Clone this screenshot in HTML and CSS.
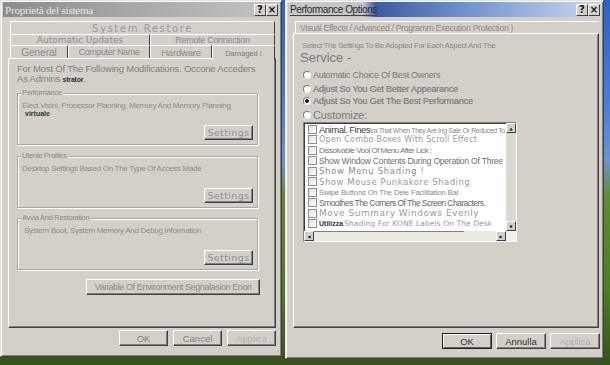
FILE: index.html
```html
<!DOCTYPE html>
<html lang="it">
<head>
    <meta charset="UTF-8">
    <title>Proprietà del sistema</title>
    <link rel="stylesheet" href="styles.css">
</head>
<body>
<div class="desktop">
    <section class="dialog sys">
        <header class="titlebar inactive">
            <span class="title">Proprietà del sistema</span>
            <span class="caption"><span class="cbtn">?</span><span class="cbtn">&#215;</span></span>
        </header>
        <div class="sheet">
            <div class="tabrow r1"><span class="tab t-sr">System Restore</span></div>
            <div class="tabrow r2">
                <span class="tab t-upd">Automatic Updates</span>
                <span class="tab t-rem">Remote Connection</span>
            </div>
            <div class="tabrow r3">
                <span class="tab t-gen">General</span>
                <span class="tab t-comp">Computer Name</span>
                <span class="tab t-hw">Hardware</span>
                <span class="tab t-adv active">Damaged !</span>
            </div>
            <div class="panel">
                <p class="intro">For Most Of The Following Modifications. Occone Acceders<br>As Admins <b>strator</b>.</p>

                <div class="group g1">
                    <span class="legend">Performance</span>
                    <p class="gtext">Elect Visini, Processor Planning, Memory And Memory Planning</p>
                    <p class="gnote">virtuale</p>
                    <div class="gfoot"><button class="btn set">Settings</button></div>
                </div>

                <div class="group g2">
                    <span class="legend">Utente Profiles</span>
                    <p class="gtext">Desktop Settings Based On The Type Of Access Made</p>
                    <div class="gfoot"><button class="btn set">Settings</button></div>
                </div>

                <div class="group g3">
                    <span class="legend">Avvia And Restoration</span>
                    <p class="gtext">System Boot, System Memory And Debug Information</p>
                    <div class="gfoot"><button class="btn set">Settings</button></div>
                </div>

                <div class="envrow">
                    <button class="btn env">Variable Of Environment Segnalasion Enori</button>
                </div>
            </div>
        </div>
        <footer class="dlgbtns">
            <button class="btn">OK</button>
            <button class="btn">Cancel</button>
            <button class="btn off">Applica</button>
        </footer>
    </section>

    <section class="dialog perf">
        <header class="titlebar active-bar">
            <span class="title">Performance Options</span>
            <span class="caption"><span class="cbtn">?</span><span class="cbtn">&#215;</span></span>
        </header>
        <div class="sheet">
            <div class="tabrow r-vis"><span class="tab t-vis">Visual Effects / Advanced / Programm Execution Protection )</span></div>
            <div class="panel ppanel">
                <p class="select">Select The Settings To Be Adopted For Each Aspect And The</p>
                <p class="service">Service -</p>

                <div class="radio r-auto"><span class="dot"></span><span>Automatic Choice Of Best Owners</span></div>
                <div class="radio r-look"><span class="dot"></span><span>Adjust So You Get Better Appearance</span></div>
                <div class="radio r-best checked"><span class="dot"></span><span>Adjust So You Get The Best Performance</span></div>
                <div class="radio r-cust"><span class="dot"></span><span>Customize:</span></div>

                <div class="listbox">
                    <ul class="items">
                        <li class="i1"><span class="box"></span><span><b>Animal. Fines</b>tra That When They Are Ing Sale Or Reduced To</span></li>
                        <li class="i2"><span class="box"></span><span>Open Combo Boxes With Scroll Effect</span></li>
                        <li class="i3"><span class="box"></span><span>Dissolvable Vool Of Menu After Lick :</span></li>
                        <li class="i4"><span class="box"></span><span>Show Window Contents During Operation Of Three</span></li>
                        <li class="i5"><span class="box"></span><span>Show Menu Shading !</span></li>
                        <li class="i6"><span class="box"></span><span>Show Mouse Punkakore Shading</span></li>
                        <li class="i7"><span class="box"></span><span>Swipe Buttons On The Dele Facilitation Bar</span></li>
                        <li class="i8"><span class="box"></span><span>Smoothes The Corners Of The Screen Characters.</span></li>
                        <li class="i9"><span class="box"></span><span>Move Summary Windows Evenly</span></li>
                        <li class="i10"><span class="box"></span><span><b>Utilizza</b>Shading For KONE Labels On The Desk</span></li>
                    </ul>
                    <div class="vbar">
                        <span class="arrow">&#9650;</span>
                        <span class="track"></span>
                        <span class="arrow">&#9660;</span>
                    </div>
                    <div class="hbar">
                        <span class="arrow">&#9664;</span>
                        <span class="thumb"></span>
                        <span class="arrow">&#9654;</span>
                    </div>
                    <div class="corner"></div>
                </div>
            </div>
        </div>
        <footer class="dlgbtns">
            <button class="btn default">OK</button>
            <button class="btn dark">Annulla</button>
            <button class="btn off">Applica</button>
        </footer>
    </section>
</div>
</body>
</html>
```

FILE: styles.css
```css
body {
    margin: 0;
    width: 610px;
    height: 365px;
    overflow: hidden;
    font-family: "Liberation Sans", Arial, sans-serif;
    font-size: 10px;
    color: #7a7a7a;
    background: linear-gradient(180deg, #2f60c4 0%, #4f7fd6 30%, #6f93cc 44%, #5f8c34 54%, #4c7c26 80%, #34521c 100%);
}
p {
    margin: 0;
}
.desktop {
    display: flex;
    gap: 3px;
    align-items: flex-start;
}

/* dialog frame */
.dialog {
    box-sizing: border-box;
    display: flex;
    flex-direction: column;
    background: #d4d0c8;
    border: 1px solid;
    border-color: #e4e2dc #404040 #404040 #e4e2dc;
    box-shadow: inset 1px 1px 0 #fff, inset -1px -1px 0 #808080;
    padding: 1px 2px 2px 2px;
}
.sys {
    width: 282px;
    height: 357px;
}
.perf {
    width: 319px;
    height: 359px;
}
.titlebar {
    height: 15px;
    display: flex;
    align-items: center;
    justify-content: space-between;
    padding: 0 1px 0 2px;
}
.inactive {
    background: linear-gradient(90deg, #8c8c8c, #a4a4a4 40%, #c4c4c4);
}
.inactive .title {
    font-family: "Liberation Serif", serif;
    font-size: 11px;
    letter-spacing: -0.2px;
    color: #e6e6e6;
}
.active-bar {
    background: linear-gradient(90deg, #c8c8c8 0%, #c4c4c6 24%, #3b5aa0 28%, #6d8fcc 55%, #b6c8e8 90%, #c8d6ee 100%);
}
.active-bar .title {
    color: #2a2a2a;
    font-size: 10px;
    letter-spacing: -0.4px;
    border-bottom: 1px solid #404040;
    line-height: 11px;
}
.caption {
    display: flex;
}
.cbtn {
    box-sizing: border-box;
    width: 12px;
    height: 12px;
    display: flex;
    align-items: center;
    justify-content: center;
    background: #d4d0c8;
    border: 1px solid;
    border-color: #fff #404040 #404040 #fff;
    font: bold 10px "DejaVu Sans", sans-serif;
    color: #111;
}

/* tabs */
.sheet {
    display: flex;
    flex-direction: column;
    margin: 4px 0 0 5px;
}
.sys .sheet {
    width: 268px;
}
.perf .sheet {
    width: 306px;
}
.tabrow {
    display: flex;
    padding: 0 1px 0 2px;
}
.tab {
    box-sizing: border-box;
    display: flex;
    align-items: center;
    justify-content: center;
    border-top: 1px solid #fff;
    border-left: 1px solid #fff;
    border-right: 1px solid #404040;
    white-space: nowrap;
    color: #8a8a8a;
}
.r1 .tab { height: 13px; }
.r2 .tab { height: 11px; }
.r3 .tab { height: 13px; }
.t-sr {
    flex: 1;
    font: 10px "DejaVu Sans", sans-serif;
    letter-spacing: 1.6px;
    color: #9a9a9a;
}
.t-upd {
    width: 140px;
    font: 9px "DejaVu Sans", sans-serif;
    letter-spacing: 0;
}
.t-rem {
    flex: 1;
    font-size: 9px;
    letter-spacing: -0.3px;
}
.t-gen { width: 58px; font-size: 10px; }
.t-comp { width: 82px; font-size: 9px; letter-spacing: -0.4px; }
.t-hw { width: 62px; font-size: 9.5px; letter-spacing: -0.2px; }
.t-adv {
    flex: 1;
    font-size: 7.5px;
    height: 15px !important;
    margin-bottom: -2px;
    background: #d4d0c8;
    position: relative;
    z-index: 1;
    color: #777;
}

/* tab page */
.panel {
    box-sizing: border-box;
    height: 270px;
    border: 1px solid;
    border-color: #fff #404040 #404040 #fff;
    box-shadow: inset -1px -1px 0 #808080;
    padding: 5px 0 0 8px;
}
.intro {
    font-size: 9.5px;
    line-height: 10px;
    letter-spacing: -0.2px;
    color: #808080;
}
.intro b {
    font-size: 7px;
    color: #333;
}
.group {
    box-sizing: border-box;
    width: 241px;
    height: 52px;
    display: flex;
    flex-direction: column;
    border: 1px solid #a8a6a0;
    box-shadow: 1px 1px 0 #fff, inset 1px 1px 0 #fff;
}
.g1 { margin-top: 8px; }
.g2 { margin-top: 11px; }
.g3 { margin-top: 10px; }
.legend {
    align-self: flex-start;
    margin: -5px 0 0 3px;
    padding: 0 1px;
    background: #d4d0c8;
    font-size: 7.5px;
    line-height: 8px;
    letter-spacing: -0.3px;
    color: #8a8a8a;
}
.gtext {
    margin: 5px 0 0 4px;
    font-size: 8px;
    line-height: 8px;
    letter-spacing: -0.3px;
    color: #8c8c8c;
    white-space: nowrap;
}
.g3 .gtext { margin-left: 6px; }
.gnote {
    margin: 0 0 0 7px;
    font-size: 7px;
    line-height: 7px;
    font-weight: bold;
    color: #333;
}
.gfoot {
    margin-top: auto;
    display: flex;
    justify-content: flex-end;
    padding: 0 4px 4px 0;
}

/* buttons */
.btn {
    box-sizing: border-box;
    height: 16px;
    padding: 0;
    background: #d4d0c8;
    border: 1px solid;
    border-color: #fff #404040 #404040 #fff;
    box-shadow: inset -1px -1px 0 #808080;
    font-family: "Liberation Sans", Arial, sans-serif;
    font-size: 9.5px;
    color: #808080;
    white-space: nowrap;
}
.set {
    width: 49px;
    height: 15px;
    font: 9.5px "DejaVu Sans", sans-serif;
    letter-spacing: 0.4px;
    color: #909090;
}
.envrow {
    display: flex;
    margin: 9px 0 0 69px;
}
.env {
    width: 174px;
    font-size: 9px;
    letter-spacing: -0.4px;
    color: #8a8a8a;
    overflow: hidden;
}
.dlgbtns {
    display: flex;
    justify-content: flex-end;
    gap: 5px;
    padding-right: 3px;
    margin-top: 2px;
}
.dlgbtns .btn {
    width: 49px;
}
.off {
    color: #b0b0b0;
}
.perf .dlgbtns {
    gap: 4px;
    padding-right: 1px;
    margin-top: 5px;
}
.perf .dlgbtns .btn {
    width: 50px;
    height: 16px;
}
.default {
    border: 1px solid #202020;
    box-shadow: inset 1px 1px 0 #fff, inset -1px -1px 0 #606060;
    color: #333;
}
.dark {
    color: #333;
}

/* performance options page */
.t-vis {
    flex: 1;
    height: 12px;
    justify-content: flex-start;
    padding-left: 4px;
    border-right: none;
    font-size: 8.5px;
    letter-spacing: -0.25px;
    color: #8a8a8a;
}
.ppanel {
    height: 295px;
    padding: 7px 0 0 8px;
}
.select {
    font-size: 8px;
    line-height: 9px;
    letter-spacing: -0.4px;
    color: #8a8a8a;
}
.service {
    margin: 2px 0 0 -2px;
    font-size: 13px;
    line-height: 12px;
    color: #7a7a7a;
}
.radio {
    display: flex;
    align-items: center;
    gap: 2px;
    height: 12px;
    white-space: nowrap;
    color: #7a7a7a;
}
.dot {
    box-sizing: border-box;
    width: 8px;
    height: 8px;
    margin-left: 1px;
    border-radius: 50%;
    border: 1px solid;
    border-color: #7a7a7a #eee #eee #7a7a7a;
    background: #fff;
}
.checked .dot {
    background: radial-gradient(circle, #222 0 1.6px, #fff 2px);
}
.r-auto { margin-top: 5px; font-size: 9px; letter-spacing: -0.3px; }
.r-look, .r-best {
    font-size: 9px;
    letter-spacing: -0.15px;
    color: #808080;
    text-shadow: 0.4px 0 0 #9a9a9a;
}
.r-look { margin-top: 2px; }
.r-best { margin-top: 0; }
.r-cust { margin-top: 2px; font-size: 11px; letter-spacing: -0.1px; }

.listbox {
    box-sizing: border-box;
    width: 214px;
    height: 120px;
    margin: 1px 0 0 1px;
    display: grid;
    grid-template-columns: 1fr 10px;
    grid-template-rows: 1fr 10px;
    border: 1px solid;
    border-color: #808080 #fff #fff #808080;
    background: #fff;
    box-shadow: inset 1px 1px 0 #404040;
}
.items {
    list-style: none;
    margin: 0;
    padding: 1px 0 0 3px;
    overflow: hidden;
}
.items li {
    display: flex;
    align-items: center;
    gap: 2px;
    height: 10.5px;
    white-space: nowrap;
    color: #8a8a8a;
}
.box {
    box-sizing: border-box;
    flex: none;
    width: 9px;
    height: 9px;
    border: 1px solid #8c8c8c;
    background: linear-gradient(135deg, #e0e0e0, #fff);
    margin-left: 1px;
}
.i1 { font-size: 7px; letter-spacing: -0.35px; }
.i1 b { font-size: 9.5px; font-weight: normal; color: #444; letter-spacing: -0.5px; }
.i2 { font: 8px "DejaVu Sans", sans-serif; letter-spacing: 0.25px; color: #9a9a9a !important; }
.i3 { font-size: 8px; letter-spacing: -0.5px; color: #777 !important; }
.i4 { font-size: 8.5px; letter-spacing: -0.2px; color: #6e6e6e !important; }
.i5 { font: 8.5px "DejaVu Sans", sans-serif; letter-spacing: 0.7px; }
.i6 { font: 8.5px "DejaVu Sans", sans-serif; letter-spacing: 0.5px; color: #999 !important; }
.i7 { font-size: 7.5px; letter-spacing: -0.1px; }
.i8 { font-size: 8.5px; letter-spacing: -0.55px; color: #666 !important; }
.i9 { font: 9px "DejaVu Sans", sans-serif; letter-spacing: 0.5px; color: #999 !important; }
.i10 { font: 7.5px "DejaVu Sans", sans-serif; letter-spacing: 0.1px; color: #999 !important; }
.i10 b { font: bold 7px "Liberation Sans", sans-serif; letter-spacing: 0; color: #333; margin-right: 1px; }

.vbar {
    display: flex;
    flex-direction: column;
    background: #dcd9d2;
}
.vbar .track {
    flex: 1;
}
.arrow {
    box-sizing: border-box;
    display: flex;
    align-items: center;
    justify-content: center;
    width: 10px;
    height: 10px;
    background: #d4d0c8;
    border: 1px solid;
    border-color: #fff #404040 #404040 #fff;
    font: 4px "DejaVu Sans", sans-serif;
    color: #111;
}
.hbar {
    display: flex;
    align-items: center;
    background: #ece9e2;
}
.hbar .thumb {
    width: 150px;
    height: 10px;
    box-sizing: border-box;
    border-top: 1px solid #808080;
}
.hbar .arrow:last-child {
    margin-left: auto;
}
.corner {
    background: #f2f0ec;
}
```
